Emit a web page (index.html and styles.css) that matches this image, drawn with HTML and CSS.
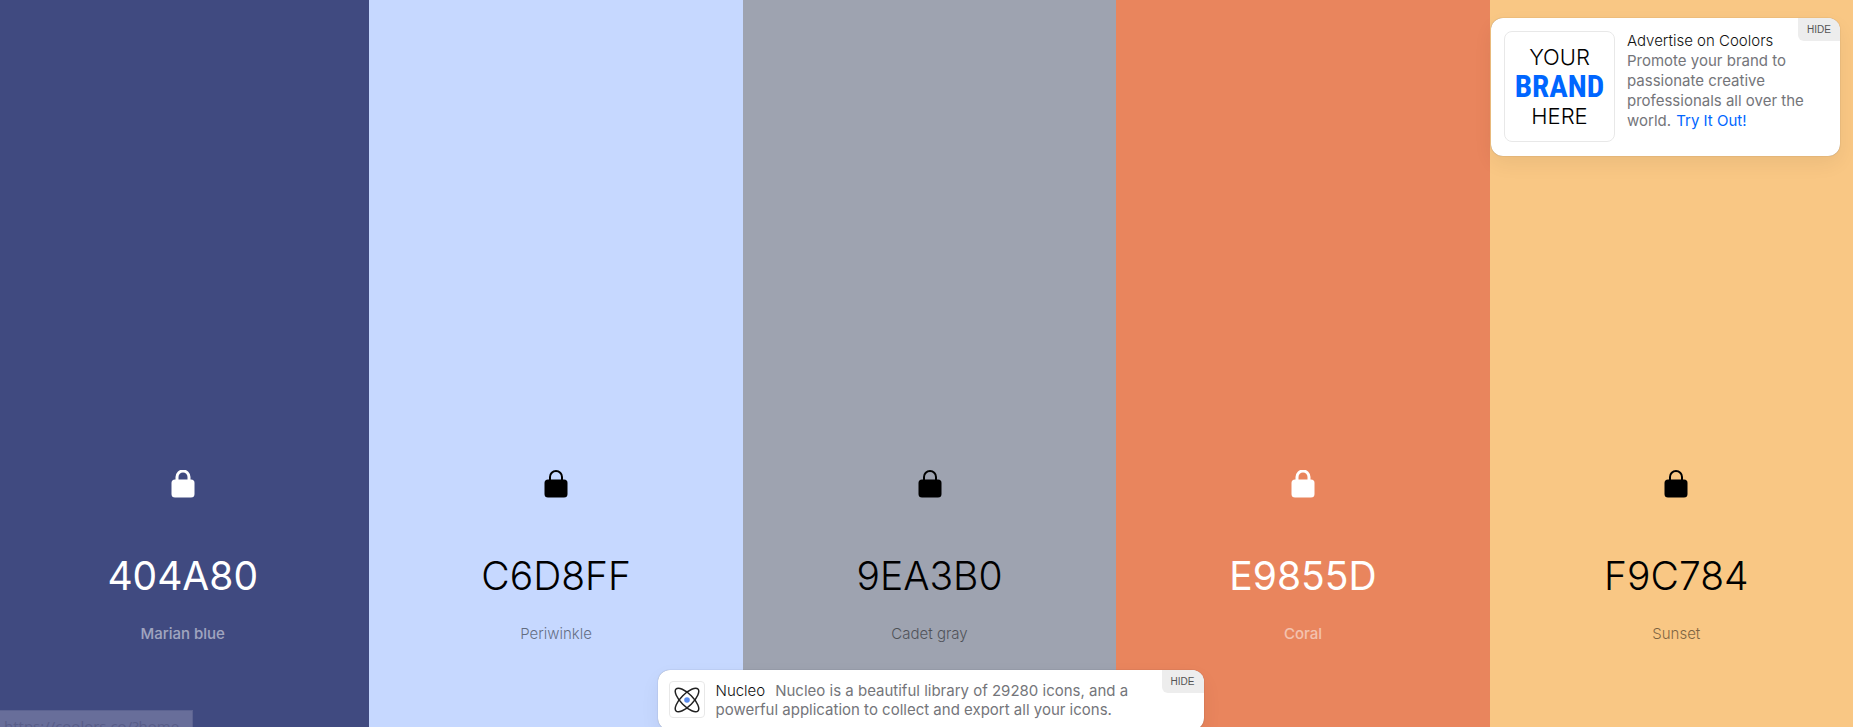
FILE: index.html
```html
<!DOCTYPE html>
<html lang="en">
<head>
<meta charset="utf-8">
<meta name="viewport" content="width=device-width, initial-scale=1">
<title>Color palette generator</title>
<link rel="stylesheet" href="styles.css">
</head>
<body>
<svg width="0" height="0" class="sprite" aria-hidden="true">
  <symbol id="lock" viewBox="0 0 24 28">
    <rect x="0.5" y="9.5" width="23" height="18" rx="3.5" fill="currentColor"/>
    <path d="M6 11V7a6 6 0 0 1 12 0v4" fill="none" stroke="currentColor"/>
  </symbol>
</svg>
<main class="palette">
  <section class="swatch swatch-marian">
    <button class="lock" aria-label="Unlock Marian blue"><svg class="lock-icon"><use href="#lock"/></svg></button>
    <button class="hex">404A80</button>
    <button class="name">Marian blue</button>
  </section>
  <section class="swatch swatch-periwinkle">
    <button class="lock" aria-label="Unlock Periwinkle"><svg class="lock-icon"><use href="#lock"/></svg></button>
    <button class="hex">C6D8FF</button>
    <button class="name">Periwinkle</button>
  </section>
  <section class="swatch swatch-cadet">
    <button class="lock" aria-label="Unlock Cadet gray"><svg class="lock-icon"><use href="#lock"/></svg></button>
    <button class="hex">9EA3B0</button>
    <button class="name">Cadet gray</button>
  </section>
  <section class="swatch swatch-coral">
    <button class="lock" aria-label="Unlock Coral"><svg class="lock-icon"><use href="#lock"/></svg></button>
    <button class="hex">E9855D</button>
    <button class="name">Coral</button>
  </section>
  <section class="swatch swatch-sunset">
    <button class="lock" aria-label="Unlock Sunset"><svg class="lock-icon"><use href="#lock"/></svg></button>
    <button class="hex">F9C784</button>
    <button class="name">Sunset</button>
  </section>
</main>

<aside class="card promo">
  <div class="promo-logo"><span>YOUR</span><strong>BRAND</strong><span>HERE</span></div>
  <div class="card-text">
    <div class="card-title">Advertise on Coolors</div>
    <div>Promote your brand to passionate creative professionals all over the world. <a href="#">Try It Out!</a></div>
  </div>
  <button class="hide">HIDE</button>
</aside>

<aside class="card banner">
  <div class="banner-logo">
    <svg class="atom" viewBox="0 0 28 28" aria-hidden="true">
      <g fill="none" stroke="#222" stroke-width="1.5">
        <ellipse cx="14" cy="14" rx="15.5" ry="6" transform="rotate(45 14 14)"/>
        <ellipse cx="14" cy="14" rx="15.5" ry="6" transform="rotate(-45 14 14)"/>
      </g>
      <circle cx="14" cy="14" r="2.8" fill="#5b8def"/>
    </svg>
  </div>
  <div class="card-text"><span class="card-title banner-title">Nucleo</span>Nucleo is a beautiful library of 29280 icons, and a powerful application to collect and export all your icons.</div>
  <button class="hide">HIDE</button>
</aside>

<div class="status">https://coolors.co/?home</div>
</body>
</html>
```
FILE: styles.css
```css
* { box-sizing: border-box; }
body {
  margin: 0;
  height: 100vh;
  overflow: hidden;
  font-family: Inter, "Liberation Sans", sans-serif;
}
button {
  border: 0;
  padding: 0;
  background: none;
  color: inherit;
  font: inherit;
  cursor: pointer;
}
.sprite { position: absolute; }
.palette {
  display: flex;
  height: 100%;
  margin: 0 -10px 0 -4px;
}
.swatch {
  flex: 1;
  display: flex;
  flex-direction: column;
  align-items: center;
  justify-content: flex-end;
  padding-bottom: 83px;
  color: #000;
}
.swatch-marian { background: #404a80; color: #fff; }
.swatch-periwinkle { background: #c6d8ff; }
.swatch-cadet { background: #9ea3b0; }
.swatch-coral { background: #e9855d; color: #fff; }
.swatch-sunset { background: #f9c784; }
.lock { display: flex; margin-bottom: 52px; }
.lock-icon { width: 24px; height: 28px; stroke-width: 2px; }
.swatch-marian .lock-icon, .swatch-coral .lock-icon { stroke-width: 3px; }
.hex {
  font-size: 39px;
  line-height: 52px;
  font-weight: 300;
}
.swatch-marian .hex, .swatch-coral .hex { font-weight: 400; }
.name {
  margin-top: 22px;
  font-size: 15px;
  line-height: 20px;
  font-weight: 300;
  opacity: .5;
}
.swatch-marian .name, .swatch-coral .name { font-weight: 500; }

.card {
  position: absolute;
  display: flex;
  background: #fff;
  border-radius: 12px;
  box-shadow: 0 0 1px rgba(0, 0, 0, .4), 0 8px 20px rgba(0, 0, 0, .06);
  color: #74757a;
  font-size: 15px;
  font-weight: 400;
  overflow: hidden;
}
.card-title { color: #111; font-weight: 300; }
.card-text { flex: 1; }
.card a { margin-left: 1px; color: #06f; text-decoration: none; }
.hide {
  position: absolute;
  top: 0;
  right: 0;
  padding: 0 9px;
  border-bottom-left-radius: 6px;
  background: #ededed;
  color: #555;
  font: 10px/23px "Liberation Sans", sans-serif;
}
.promo {
  top: 18px;
  right: 13px;
  width: 349px;
  padding: 13px 24px 14px 13px;
  gap: 12px;
  line-height: 20px;
}
.promo-logo {
  width: 111px;
  height: 111px;
  display: flex;
  flex-direction: column;
  align-items: center;
  justify-content: center;
  border: 1px solid #e8e8e8;
  border-radius: 8px;
  color: #000;
  font-size: 22px;
  font-weight: 300;
  line-height: 26px;
}
.promo-logo strong {
  color: #06f;
  font: bold 31px/33px "Roboto Condensed", "Open Sans Condensed", "Liberation Sans Narrow", sans-serif;
}
.banner {
  left: 50%;
  bottom: -3px;
  width: 546px;
  margin-left: -269px;
  padding: 11px 60px 11px 11px;
  gap: 11px;
  line-height: 19px;
}
.banner-logo {
  width: 36px;
  height: 37px;
  display: flex;
  align-items: center;
  justify-content: center;
  border: 1px solid #e8e8e8;
  border-radius: 4px;
}
.atom { width: 28px; height: 28px; }
.banner-title { margin-right: 10px; }
.status {
  position: absolute;
  left: 0;
  bottom: 0;
  height: 17px;
  padding: 0 13px 0 4px;
  overflow: hidden;
  background: #686e9a;
  border: 1px solid #5c6391;
  border-width: 1px 1px 0 0;
  color: #585d88;
  font: 15px/30px "Open Sans", sans-serif;
}
```
